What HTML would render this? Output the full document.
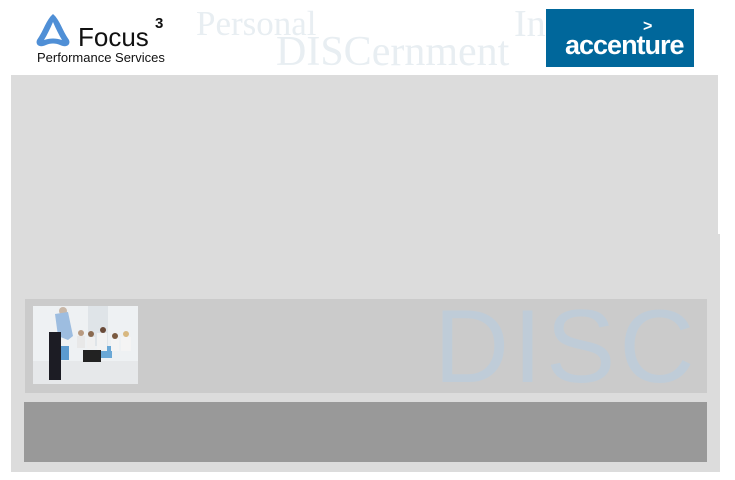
<!DOCTYPE html>
<html><head><meta charset="utf-8"><style>
body{margin:0;width:735px;height:480px;background:#fff;position:relative;overflow:hidden;font-family:"Liberation Sans",sans-serif}
.a{position:absolute}
</style></head><body>
<div class="a" style="left:11px;top:75px;width:707px;height:397px;background:#dcdcdc"></div>
<div class="a" style="left:716px;top:234px;width:4px;height:238px;background:#dcdcdc"></div>
<div class="a" style="left:25px;top:299px;width:682px;height:94px;background:#cbcbcb"></div>
<div class="a" style="left:434px;top:290px;font-size:104px;letter-spacing:4px;color:#bfccd8;font-family:'Liberation Sans',sans-serif;line-height:114px;white-space:nowrap">DISC</div>
<div class="a" style="left:24px;top:402px;width:683px;height:60px;background:#999"></div>
<svg class="a" style="left:33px;top:306px" width="105" height="78" viewBox="0 0 105 78">
<rect width="105" height="78" fill="#eef1f3"/>
<rect x="55" y="0" width="20" height="40" fill="#dfe4e8"/>
<rect x="0" y="55" width="105" height="23" fill="#e6e8ea"/>
<rect x="20" y="40" width="16" height="14" fill="#5b9bd0"/>
<rect x="65" y="40" width="14" height="12" fill="#6aa8d6"/>
<circle cx="30" cy="5" r="4" fill="#c9b8a8"/>
<path d="M22 8 L35 6 L40 30 L35 34 L25 30 Z" fill="#9dbde0"/>
<rect x="16" y="26" width="12" height="48" fill="#1c1c24"/>
<circle cx="48" cy="27" r="3" fill="#b89a80"/><rect x="44" y="30" width="8" height="12" fill="#e8e8e8"/>
<circle cx="58" cy="28" r="3" fill="#8a6a50"/><rect x="54" y="31" width="8" height="12" fill="#f0f0f0"/>
<circle cx="70" cy="24" r="3" fill="#6a4a38"/><rect x="64" y="27" width="10" height="18" fill="#f2f2f2"/>
<rect x="50" y="44" width="18" height="12" fill="#222"/>
<circle cx="82" cy="30" r="3" fill="#7a5a40"/><rect x="78" y="33" width="8" height="12" fill="#f4f4f4"/>
<circle cx="93" cy="28" r="3" fill="#d8b880"/><rect x="88" y="31" width="10" height="14" fill="#f4f4f4"/>
</svg>
<svg class="a" style="left:34px;top:12px" width="38" height="37" viewBox="0 0 38 37">
<path d="M19 2 C12 8 10 18 3 28 C1 33 6 36 12 33 C16 31 22 31 26 33 C32 36 37 33 35 28 C28 18 26 8 19 2 Z M19 10 C22 17 25 23 28 28 C22 26 16 26 10 28 C13 23 16 17 19 10 Z" fill="#4f8fd6" fill-rule="evenodd"/>
</svg>
<div class="a" style="left:78px;top:22px;font-size:26px;color:#111">Focus</div>
<div class="a" style="left:155px;top:15px;font-size:15px;font-weight:bold;color:#111">3</div>
<div class="a" style="left:37px;top:50px;font-size:13px;color:#111">Performance Services</div>
<div class="a" style="left:196px;top:4px;font-size:35px;color:#e8eef2;font-family:'Liberation Serif',serif">Personal</div>
<div class="a" style="left:276px;top:28px;font-size:42px;color:#e8eef2;font-family:'Liberation Serif',serif">DISCernment</div>
<div class="a" style="left:514px;top:2px;font-size:38px;color:#e8eef2;font-family:'Liberation Serif',serif">In</div>
<div class="a" style="left:546px;top:9px;width:148px;height:58px;background:#00679b"></div>
<div class="a" style="left:565px;top:30px;font-size:27px;color:#fff;font-weight:bold;letter-spacing:-1px">accenture</div>
<div class="a" style="left:643px;top:18px;font-size:16px;color:#fff;font-weight:bold">&gt;</div>
</body></html>
